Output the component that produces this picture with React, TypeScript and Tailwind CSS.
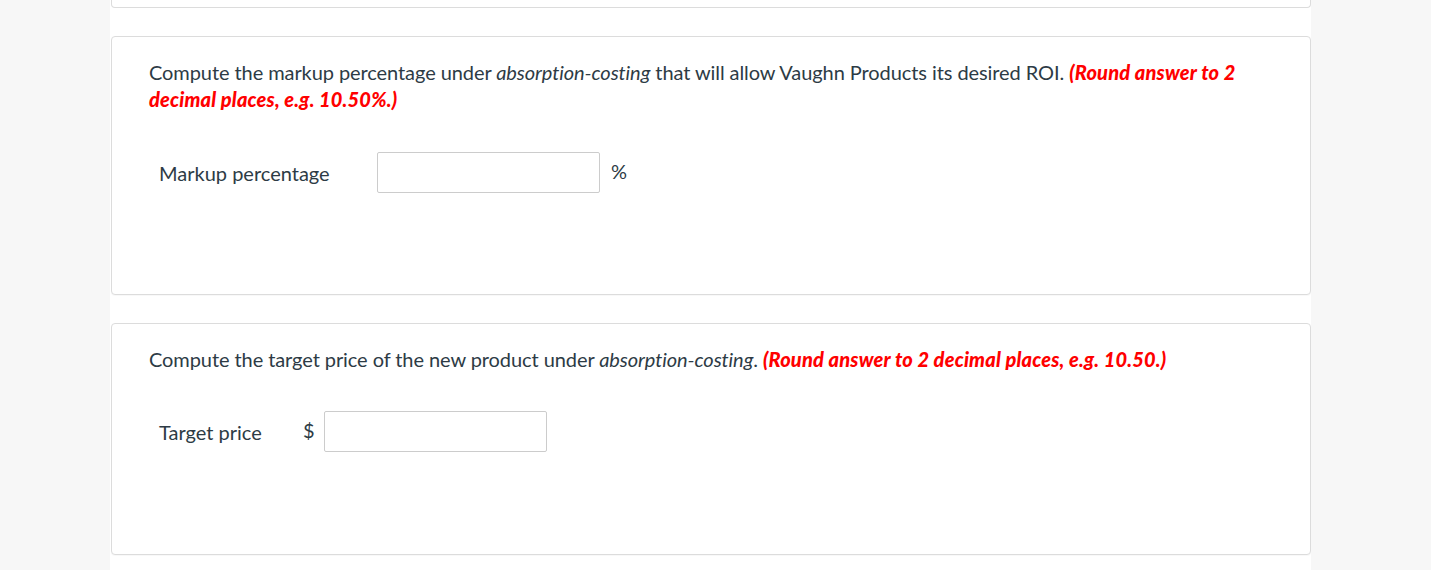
import React from "react";

const FONT = "font-['Lato','Liberation_Sans',sans-serif]";

function Card({ children, bottom }: { children: React.ReactNode; bottom: string }) {
  return (
    <section className={`mt-[28px] rounded-[4px] border border-[#dcdcdc] bg-white px-[37px] pt-[22px] shadow-[0_1px_1px_rgba(0,0,0,0.03)] ${bottom}`}>
      {children}
    </section>
  );
}

function NumberInput() {
  return <input type="text" className="h-[41px] w-[223px] rounded-[2px] border border-[#cccccc] bg-white px-2 outline-none" />;
}

export default function App() {
  return (
    <div className={`min-h-screen bg-[#f7f7f7] ${FONT} text-[#2d3b45]`}>
      <div className="ml-[110px] min-h-[570px] w-[1201px] bg-white pl-px">
        <div className="h-[8px] rounded-b-[4px] border-x border-b border-[#dcdcdc]" />

        <Card bottom="pb-[101px]">
          <p className="text-[20px] leading-[27px] tracking-[-0.08px]">
            Compute the markup percentage under <i>absorption-costing</i> that will allow Vaughn Products its desired ROI.{" "}
            <b className="font-black italic tracking-[0.18px] text-[#ff0000]">(Round answer to 2 decimal places, e.g. 10.50%.)</b>
          </p>
          <div className="mt-[39px] flex items-center pl-[10px] text-[20px]">
            <span className="w-[218px]">Markup percentage</span>
            <NumberInput />
            <span className="ml-[11px] -mt-[4px]">%</span>
          </div>
        </Card>

        <Card bottom="pb-[102px]">
          <p className="text-[20px] leading-[27px] tracking-[-0.08px]">
            Compute the target price of the new product under <i>absorption-costing</i>.{" "}
            <b className="font-black italic tracking-[0.18px] text-[#ff0000]">(Round answer to 2 decimal places, e.g. 10.50.)</b>
          </p>
          <div className="mt-[38px] flex items-center pl-[10px] text-[20px]">
            <span className="w-[144px]">Target price</span>
            <span className="-mt-[4px] w-[21px]">$</span>
            <NumberInput />
          </div>
        </Card>
      </div>
    </div>
  );
}
